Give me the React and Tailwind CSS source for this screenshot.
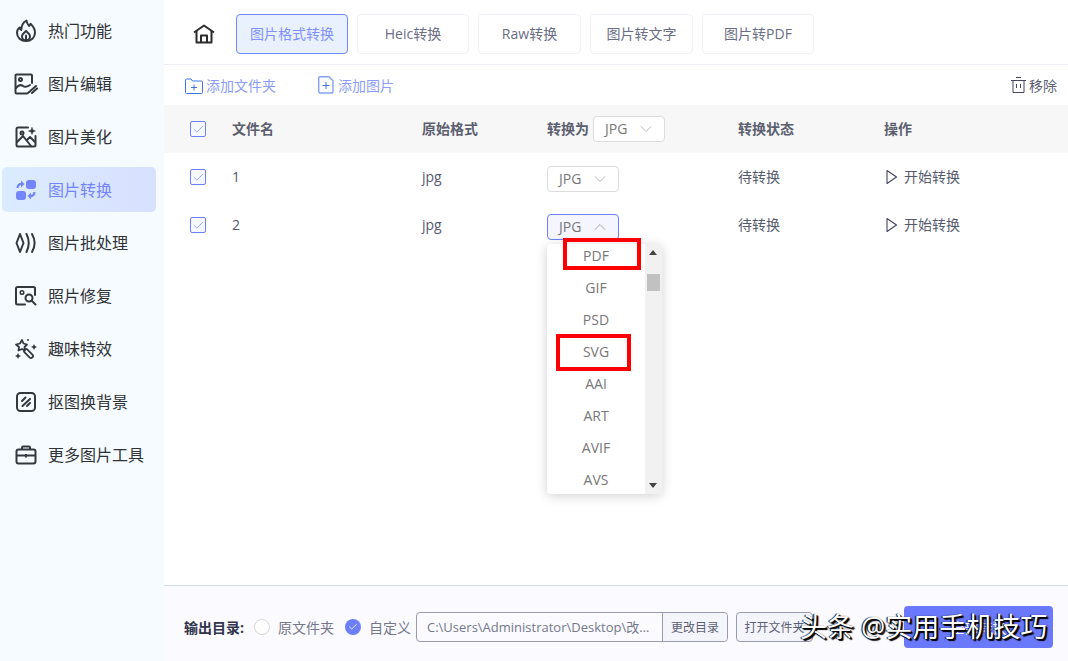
import { Check, ChevronDown, ChevronUp } from "lucide-react";

const FireIcon = () => (
  <svg width="22" height="24" viewBox="0 0 22 24" fill="none" stroke="#33383f" strokeWidth="2" strokeLinejoin="round" strokeLinecap="round">
    <path d="M11.500 1.500c.2 2.500 1.300 4 2.500 5.500.7-.6 1.200-1.300 1.500-2.200 2.500 2.400 4.500 5.200 4.500 9 0 4.700-3.900 8.200-9 8.200s-9-3.500-9-8.200c0-2.600 1.400-4.500 2.800-5.300.2 1.200.7 2 1.500 2.500C6.300 7 8 3.500 11.500 1.500z" />
    <path d="M11 12c-1.700 1.500-4 3-4 5.400 0 2 1.700 3.800 4 3.800s4-1.800 4-3.800c0-2.400-2.300-3.900-4-5.400z" />
    <path d="M11 16.500v5" />
  </svg>
);

const EditImageIcon = () => (
  <svg width="24" height="22" viewBox="0 0 24 22" fill="none" stroke="#33383f" strokeWidth="2" strokeLinecap="round" strokeLinejoin="round">
    <path d="M18 10V2.500a1 1 0 0 0-1-1H2.500a1 1 0 0 0-1 1v17a1 1 0 0 0 1 1H13" />
    <circle cx="6.500" cy="6.500" r="1.500" />
    <path d="M2 15c3-3.500 5-3.500 7-2s4 1 7-1" />
    <path d="M14 20l8-7M18 20l5-4.500" />
  </svg>
);

const BeautyIcon = () => (
  <svg width="22" height="22" viewBox="0 0 22 22" fill="none" stroke="#33383f" strokeWidth="2" strokeLinecap="round" strokeLinejoin="round">
    <path d="M13 1.500H3a1.500 1.500 0 0 0-1.500 1.500v16A1.500 1.500 0 0 0 3 20.500h16a1.500 1.500 0 0 0 1.500-1.500V10" />
    <circle cx="7" cy="7" r="1.500" />
    <path d="M2 16l6-6 8 10M12 14l3-3 5 5" />
    <path d="M17 1.500l1 2.500 2.500 1-2.500 1-1 2.500-1-2.500-2.500-1 2.500-1z" fill="#33383f" strokeWidth="0.500" />
  </svg>
);

const ConvertIcon = () => (
  <svg width="22" height="22" viewBox="0 0 22 22" fill="#7484fb">
    <rect x="11" y="1" width="10" height="9" rx="3" />
    <rect x="1" y="12" width="10" height="9" rx="3" />
    <path d="M1.500 9c0-3 1.500-5 4.500-5.300V1.500L9.500 5 6 8.500V6C4.500 6.300 3.800 7.500 3.500 9z" />
    <path d="M20.500 13c0 3-1.500 5-4.500 5.300v2.200L12.500 17 16 13.500V16c1.500-.3 2.200-1.500 2.500-3z" />
  </svg>
);

const BatchIcon = () => (
  <svg width="22" height="22" viewBox="0 0 22 22" fill="none" stroke="#33383f" strokeWidth="2" strokeLinejoin="round" strokeLinecap="round">
    <path d="M5 2L1.500 11 5 20 8.500 11z" />
    <path d="M11.500 2c3 6 3 12 0 18M17 2c3.500 6 3.500 12 0 18" />
  </svg>
);

const RepairIcon = () => (
  <svg width="22" height="20" viewBox="0 0 22 20" fill="none" stroke="#33383f" strokeWidth="2" strokeLinecap="round" strokeLinejoin="round">
    <path d="M10 18.500H2.500a1.500 1.500 0 0 1-1.500-1.500V2.500A1.500 1.500 0 0 1 2.500 1h16A1.500 1.500 0 0 1 20 2.500V9" />
    <circle cx="7" cy="6.500" r="1.800" strokeWidth="1.500" />
    <circle cx="14" cy="12" r="3.500" />
    <path d="M16.500 14.500l4 4" />
  </svg>
);

const MagicIcon = () => (
  <svg width="24" height="22" viewBox="0 0 24 22" fill="none" stroke="#33383f" strokeWidth="1.800" strokeLinecap="round" strokeLinejoin="round">
    <path d="M8 2l1.500 3.500L13 6.500 10.500 9l.5 3.500L8 11l-3.500 1.500.5-3.500L2 6.500l4-1z" />
    <rect x="12.500" y="10" width="4" height="11" rx="2" transform="rotate(-45 14.500 15.500)" />
    <circle cx="14" cy="2" r="1" fill="#33383f" stroke="none" />
    <path d="M20 6l1 2 2 1-2 1-1 2-1-2-2-1 2-1z" fill="#33383f" stroke="none" />
    <path d="M4 15l1 2 2 1-2 1-1 2-1-2-2-1 2-1z" fill="#33383f" stroke="none" />
  </svg>
);

const MatteIcon = () => (
  <svg width="20" height="20" viewBox="0 0 20 20" fill="none" stroke="#33383f" strokeWidth="2" strokeLinecap="round">
    <rect x="1" y="1" width="18" height="18" rx="3.500" />
    <path d="M6 9l3.500-3.500M6.500 14L14 7M11 14l3-3" />
  </svg>
);

const ToolboxIcon = () => (
  <svg width="22" height="20" viewBox="0 0 22 20" fill="none" stroke="#33383f" strokeWidth="2" strokeLinejoin="round">
    <rect x="1.500" y="4.500" width="19" height="14" rx="2" />
    <path d="M7 4.500V2.500a1 1 0 0 1 1-1h6a1 1 0 0 1 1 1v2M1.500 10.500h19M11 9v3.500" />
  </svg>
);

const HomeIcon = () => (
  <svg width="22" height="20" viewBox="0 0 22 20" fill="none" stroke="#2b2b2b" strokeWidth="2" strokeLinejoin="round">
    <path d="M1 8.500L11 1.500l10 7" />
    <path d="M3.500 7v11.500h15V7" />
    <path d="M8 18.500v-7h6v7" />
  </svg>
);

const AddFolderIcon = () => (
  <svg className="mt-[2px]" width="18" height="16" viewBox="0 0 18 16" fill="none" stroke="#3f74e8" strokeWidth="1" strokeLinejoin="round">
    <path d="M.500 2a1 1 0 0 1 1-1h4.500l1.500 2h9a1 1 0 0 1 1 1v10.500a1 1 0 0 1-1 1h-15a1 1 0 0 1-1-1z" />
    <path d="M9 6.500v6M6 9.500h6" />
  </svg>
);

const AddFileIcon = () => (
  <svg width="16" height="18" viewBox="0 0 16 18" fill="none" stroke="#84a2f4" strokeWidth="1.400" strokeLinejoin="round">
    <path d="M2 .700h9l4 4V15.500a1.500 1.500 0 0 1-1.500 1.500H2A1.500 1.500 0 0 1 .700 15.500V2A1.500 1.500 0 0 1 2 .700z" />
    <path d="M8 6v7M4.500 9.500h7" stroke="#3f74e8" strokeWidth="1" />
  </svg>
);

const TrashIcon = () => (
  <svg width="15" height="16" viewBox="0 0 15 16" fill="none" stroke="#44465c" strokeWidth="1">
    <path d="M0 3.500h15M5 .500h5M2 3.500v12h11v-12M5.500 7v4M9.500 7v4" />
  </svg>
);

const PlayIcon = () => (
  <svg className="mt-[2px]" width="12" height="16" viewBox="0 0 12 16" fill="none" stroke="#44465c" strokeWidth="1.100" strokeLinejoin="round">
    <path d="M1 1.500L10.500 8 1 14.500z" />
  </svg>
);

const menu = [
  { label: "热门功能", icon: <FireIcon /> },
  { label: "图片编辑", icon: <EditImageIcon /> },
  { label: "图片美化", icon: <BeautyIcon /> },
  { label: "图片转换", icon: <ConvertIcon />, active: true },
  { label: "图片批处理", icon: <BatchIcon /> },
  { label: "照片修复", icon: <RepairIcon /> },
  { label: "趣味特效", icon: <MagicIcon /> },
  { label: "抠图换背景", icon: <MatteIcon /> },
  { label: "更多图片工具", icon: <ToolboxIcon /> },
];

const tabs = [
  { label: "图片格式转换", width: "w-[112px]", active: true },
  { label: "Heic转换", width: "w-[112px]" },
  { label: "Raw转换", width: "w-[103px]" },
  { label: "图片转文字", width: "w-[103px]" },
  { label: "图片转PDF", width: "w-[112px]" },
];

const formats = ["PDF", "GIF", "PSD", "SVG", "AAI", "ART", "AVIF", "AVS"];

const Checkbox = () => (
  <span className="mt-[2px] flex h-4 w-4 items-center justify-center rounded-[2px] border border-[#6d7ffb] bg-[#f7f8ff]">
    <Check size={13} strokeWidth={1.25} className="text-[#6d7ffb]" />
  </span>
);

const Select = ({ open }) => (
  <div
    className={
      "flex h-[26px] w-[72px] items-center rounded-[4px] border pl-[11px] text-[#777] " +
      (open ? "border-[#6d7ffb] bg-[#f4f5ff]" : "border-[#dcdcdc] bg-white")
    }
  >
    <span className="-mt-[2px] w-[31px]">JPG</span>
    {open ? (
      <ChevronUp size={20} strokeWidth={1} className="text-[#999]" />
    ) : (
      <ChevronDown size={20} strokeWidth={1} className="text-[#aaa]" />
    )}
  </div>
);

const Dropdown = () => (
  <div className="absolute left-0 top-[36px] z-10 flex h-[250px] w-[115px] overflow-hidden rounded-[4px] bg-white shadow-[0_2px_12px_rgba(0,0,0,0.18)]">
    <ul className="-mt-1 w-[98px] text-center text-[#777]">
      {formats.map((item) => (
        <li key={item} className="flex h-8 shrink-0 items-center justify-center pb-[2px]">
          {item}
        </li>
      ))}
    </ul>
    <div className="relative w-[17px] bg-[#f1f1f1]">
      <span className="absolute left-[4px] top-[6px] h-0 w-0 border-x-[4px] border-b-[5px] border-x-transparent border-b-[#444]" />
      <span className="absolute left-[2px] top-[30px] h-[17px] w-[13px] bg-[#c1c1c1]" />
      <span className="absolute bottom-[6px] left-[4px] h-0 w-0 border-x-[4px] border-t-[5px] border-x-transparent border-t-[#444]" />
    </div>
  </div>
);

const Row = ({ name, open }) => (
  <div className="grid h-12 grid-cols-[42px_190px_125px_191px_146px_1fr] items-center pb-[2px] pl-[26px] text-[#555a6e]">
    <Checkbox />
    <span>{name}</span>
    <span>jpg</span>
    <div className="relative pt-[6px]">
      <Select open={open} />
      {open && <Dropdown />}
    </div>
    <span>待转换</span>
    <div className="flex items-center gap-[6px] pl-[2px]">
      <PlayIcon />
      <span>开始转换</span>
    </div>
  </div>
);

export default function App() {
  return (
    <div className="relative flex h-[661px] w-[1068px] overflow-hidden bg-white text-[14px] font-['Open_Sans','Noto_Sans_CJK_SC',sans-serif]">
      {/* sidebar */}
      <aside className="flex w-[164px] shrink-0 flex-col gap-2 bg-[#f6fbff] pl-[2px] pt-2">
        {menu.map((item) => (
          <div
            key={item.label}
            className={
              "flex h-[45px] w-[154px] items-center rounded-[5px] text-[16px] " +
              (item.active ? "bg-gradient-to-r from-[#dcecff] to-[#d7e0ff] text-[#7484fb]" : "text-[#2f3238]")
            }
          >
            <span className="flex w-[46px] justify-center pl-[1px]">{item.icon}</span>
            <span>{item.label}</span>
          </div>
        ))}
      </aside>

      <main className="flex min-w-0 flex-1 flex-col">
        {/* tabs */}
        <div className="flex h-[65px] shrink-0 items-center border-b border-[#eceef5] pt-[4px]">
          <span className="flex w-[72px] justify-center pl-[11px] pr-[4px]">
            <HomeIcon />
          </span>
          <div className="flex gap-[9px]">
            {tabs.map((tab) => (
              <div
                key={tab.label}
                className={
                  "flex h-10 items-center justify-center rounded-[4px] border pb-[2px] " +
                  tab.width +
                  " " +
                  (tab.active
                    ? "border-[#7388fb] bg-[#e9f1ff] text-[#7f8ffb]"
                    : "border-[#f0f1f6] bg-white text-[#6a6d85]")
                }
              >
                {tab.label}
              </div>
            ))}
          </div>
        </div>

        {/* toolbar */}
        <div className="flex h-10 shrink-0 items-center pl-[21px] pr-[11px] text-[#8a9cf8]">
          <AddFolderIcon />
          <span className="ml-[3px]">添加文件夹</span>
          <span className="ml-[42px]">
            <AddFileIcon />
          </span>
          <span className="ml-[4px]">添加图片</span>
          <span className="ml-auto flex items-center gap-[3px] text-[#5c5f75]">
            <TrashIcon />
            移除
          </span>
        </div>

        {/* table */}
        <div className="grid h-12 shrink-0 grid-cols-[42px_190px_125px_191px_146px_1fr] items-center bg-[#f7f7f7] pb-[2px] pl-[26px] font-bold text-[#5c5f70]">
          <Checkbox />
          <span>文件名</span>
          <span>原始格式</span>
          <div className="flex items-center gap-[4px]">
            <span>转换为</span>
            <div className="mt-[2px] font-normal">
              <Select />
            </div>
          </div>
          <span>转换状态</span>
          <span>操作</span>
        </div>
        <Row name="1" />
        <Row name="2" open />

        {/* footer */}
        <div className="mt-auto flex h-[76px] shrink-0 items-center border-t border-[#d5dbe9] bg-[#fafaff] pl-5 pt-[7px] text-[#75788a]">
          <span className="font-bold text-[#30334a]">输出目录:</span>
          <span className="ml-[10px] h-4 w-4 rounded-full border border-[#d9d9d9] bg-white" />
          <span className="ml-2">原文件夹</span>
          <span className="ml-[11px] flex h-4 w-4 items-center justify-center rounded-full bg-[#6d7ffb]">
            <Check size={10} strokeWidth={2} className="text-white" />
          </span>
          <span className="ml-2">自定义</span>
          <div className="ml-[5px] flex h-[30px] w-[312px] items-center rounded-[4px] border border-[#9a9bb3]">
            <span className="mt-[2px] w-[245px] truncate px-[10px] text-[13px]">C:\Users\Administrator\Desktop\改图片格式</span>
            <span className="flex h-full flex-1 items-center justify-center rounded-r-[4px] border-l border-[#9a9bb3] bg-[#f4f5fb] pt-[2px] text-[12px] text-[#5c5f75]">
              更改目录
            </span>
          </div>
          <span className="ml-2 flex h-[30px] w-[77px] items-center justify-center whitespace-nowrap rounded-[4px] border border-[#9a9bb3] bg-[#f4f5fb] pt-[2px] text-[12px] text-[#5c5f75]">
            打开文件夹
          </span>
          <span className="ml-[91px] flex h-[42px] w-[149px] items-center justify-center rounded-[4px] bg-[#6a78fb] text-[14px] text-white">
            全部转换
          </span>
        </div>
      </main>

      {/* red annotation boxes */}
      <div className="pointer-events-none absolute left-[563px] top-[238px] z-20 h-[32px] w-[78px] border-[4px] border-[#f00]" />
      <div className="pointer-events-none absolute left-[556px] top-[334px] z-20 h-[37px] w-[75px] border-[4px] border-[#f00]" />

      {/* watermark */}
      <div className="absolute left-[800px] top-[608px] z-30 whitespace-nowrap text-[27px] leading-[38px] text-white [text-shadow:1px_1px_1px_#000,-1px_0_1px_#000,2px_2px_1px_#000]">
        头条 @实用手机技巧
      </div>
    </div>
  );
}
